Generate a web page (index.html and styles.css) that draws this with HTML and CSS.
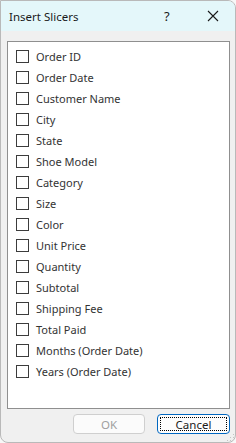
FILE: index.html
```html
<!DOCTYPE html>
<html>
<head>
<meta charset="utf-8">
<link rel="stylesheet" href="styles.css">
</head>
<body>
<div class="window">
  <div class="titlebar">
    <span class="title">Insert Slicers</span>
    <span class="help">?</span>
    <span class="close"><svg width="12" height="12" viewBox="0 0 12 12"><path d="M1 1 L11 11 M11 1 L1 11" stroke="#1a1a1a" stroke-width="1.1" fill="none"/></svg></span>
  </div>
  <div class="content">
    <div class="listbox">
      <label class="item"><span class="box"></span>Order ID</label>
      <label class="item"><span class="box"></span>Order Date</label>
      <label class="item"><span class="box"></span>Customer Name</label>
      <label class="item"><span class="box"></span>City</label>
      <label class="item"><span class="box"></span>State</label>
      <label class="item"><span class="box"></span>Shoe Model</label>
      <label class="item"><span class="box"></span>Category</label>
      <label class="item"><span class="box"></span>Size</label>
      <label class="item"><span class="box"></span>Color</label>
      <label class="item"><span class="box"></span>Unit Price</label>
      <label class="item"><span class="box"></span>Quantity</label>
      <label class="item"><span class="box"></span>Subtotal</label>
      <label class="item"><span class="box"></span>Shipping Fee</label>
      <label class="item"><span class="box"></span>Total Paid</label>
      <label class="item"><span class="box"></span>Months (Order Date)</label>
      <label class="item"><span class="box"></span>Years (Order Date)</label>
    </div>
    <div class="buttons">
      <button class="btn ok" disabled>OK</button>
      <button class="btn cancel"><span class="focus">Cancel</span></button>
    </div>
  </div>
  <div class="grip"></div>
</div>
</body>
</html>
```
FILE: styles.css
```css
html, body { margin: 0; padding: 0; background: #f7f7f7; }
body { font-family: "Noto Sans", "Liberation Sans", sans-serif; }
.window {
  position: relative;
  width: 236px;
  height: 443px;
  box-sizing: border-box;
  border: 1px solid #b9b9b9;
  border-radius: 0 8px 8px 8px;
  background: #f0f0f0;
  display: flex;
  flex-direction: column;
  overflow: hidden;
}
.titlebar {
  height: 30px;
  background: #e4f7fa;
  display: flex;
  align-items: center;
  padding-left: 8px;
  font-size: 11.5px;
  color: #1a1a1a;
}
.title { flex: 1; }
.help { width: 14px; margin-right: 29px; font-size: 13px; }
.close { width: 12px; height: 12px; margin-right: 16px; display: flex; }
.content {
  flex: 1;
  display: flex;
  flex-direction: column;
  padding: 10px 5px 8px 6px;
}
.listbox {
  height: 368px;
  box-sizing: border-box;
  border: 1px solid #8f8f8f;
  background: #fff;
  padding: 4px 8px;
  display: flex;
  flex-direction: column;
}
.item {
  height: 21px;
  display: flex;
  align-items: center;
  font-size: 11px;
  color: #333;
  white-space: nowrap;
}
.box {
  width: 13px;
  height: 13px;
  box-sizing: border-box;
  border: 1px solid #3c3c3c;
  margin-right: 7px;
  flex: none;
}
.buttons {
  display: flex;
  justify-content: flex-end;
  gap: 12px;
  margin-top: 5px;
}
.btn {
  height: 20px;
  box-sizing: border-box;
  border-radius: 4px;
  font-family: inherit;
  font-size: 11.5px;
  padding: 0;
  display: flex;
  align-items: center;
  justify-content: center;
}
.ok {
  width: 72px;
  background: #fbfbfb;
  border: 1px solid #cfcfcf;
  color: #9f9f9f;
}
.cancel {
  width: 73px;
  background: #fdfdfd;
  border: 1px solid #0067c0;
  color: #1a1a1a;
  padding: 2px;
}
.focus {
  flex: 1;
  align-self: stretch;
  border: 1px dotted #000;
  display: flex;
  align-items: center;
  justify-content: center;
}
.grip {
  position: absolute;
  right: 1px;
  bottom: 1px;
  width: 8px;
  height: 8px;
  background:
    radial-gradient(circle, #c4c4c4 0.9px, transparent 1px) 0 0 / 3px 3px;
  clip-path: polygon(100% 0, 100% 100%, 0 100%);
}
```
